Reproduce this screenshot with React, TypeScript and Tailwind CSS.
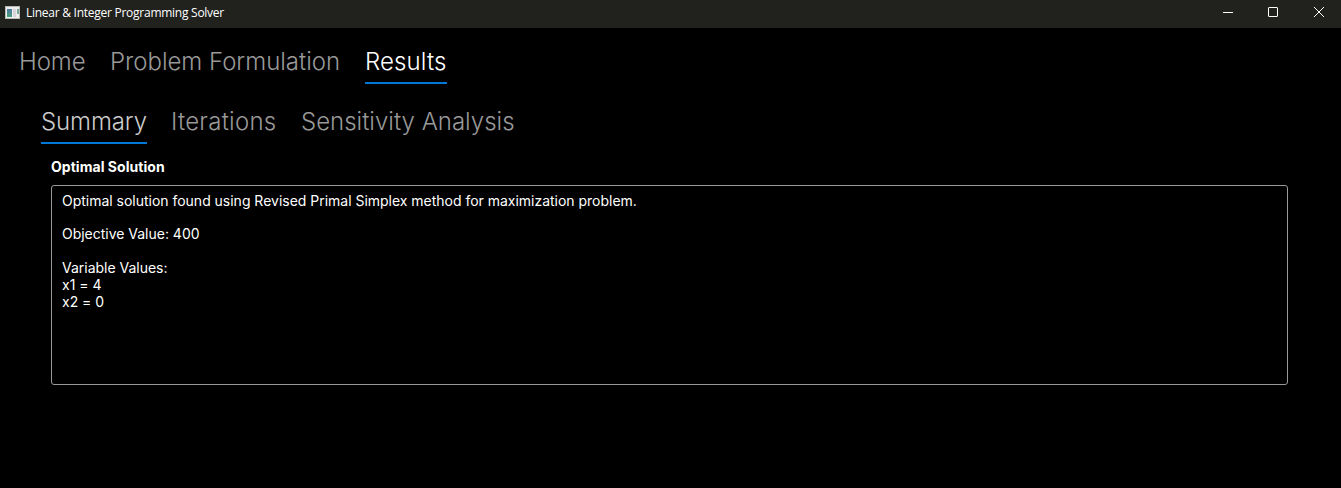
import React from "react";

type TabProps = { label: string; active?: boolean; className: string };

function Tab({ label, active = false, className }: TabProps) {
  return (
    <div className={`relative h-[48px] shrink-0 whitespace-nowrap pt-[2px] text-[24px] leading-[48px] font-light ${className}`}>
      {label}
      {active && <span className="absolute inset-x-0 bottom-0 h-[2px] bg-[#0078d7]" />}
    </div>
  );
}

export default function App() {
  return (
    <div className="h-[488px] w-[1341px] overflow-hidden bg-black font-['Inter',sans-serif] text-white">
      <header className="flex h-[28px] items-center bg-[#21211e] pl-[5px]">
        <svg width="15" height="13" viewBox="0 0 15 13" className="mb-[4px]" shapeRendering="crispEdges">
          <defs>
            <linearGradient id="pane" x1="0" y1="0" x2="0" y2="1">
              <stop offset="0" stopColor="#5078a0" />
              <stop offset="1" stopColor="#46a078" />
            </linearGradient>
          </defs>
          <rect width="15" height="13" fill="#b8b8b8" />
          <rect x="1" y="1" width="13" height="11" fill="#eeeeee" />
          <rect x="2" y="3" width="5" height="8" fill="url(#pane)" />
          <rect x="8" y="3" width="3" height="8" fill="#d8d4dc" />
          <rect x="12" y="3" width="2" height="5" fill="#78aa98" />
        </svg>
        <span className="mb-[2px] ml-[6px] font-['Open_Sans',sans-serif] text-[12px] tracking-[-0.26px]">Linear &amp; Integer Programming Solver</span>
        <svg width="106" height="12" viewBox="0 0 106 12" className="mr-[15px] mb-[4px] ml-auto" fill="none" stroke="white">
          <path d="M3 6.5h10M94 1l10 10M104 1L94 11" />
          <rect x="48.5" y="1.5" width="9" height="9" rx="0.5" />
        </svg>
      </header>
      <nav className="flex h-[60px] gap-[25px] pt-[8px] pl-[19px]">
        <Tab label="Home" className="w-[66px] text-[#999999] tracking-[-0.1px]" />
        <Tab label="Problem Formulation" className="w-[230px] text-[#999999] tracking-[-0.02px]" />
        <Tab label="Results" active className="w-[82px] text-white tracking-[0.12px]" />
      </nav>
      <nav className="flex h-[60px] gap-[25px] pt-[8px] pl-[41px]">
        <Tab label="Summary" active className="w-[106px] text-[#cccccc] tracking-[-0.12px]" />
        <Tab label="Iterations" className="-ml-px w-[105px] text-[#999999] tracking-[0.25px]" />
        <Tab label="Sensitivity Analysis" className="text-[#999999]" />
      </nav>
      <main className="pt-[10px] pl-[51px]">
        <h1 className="text-[14px] leading-[17px] font-bold tracking-[0.04px]">Optimal Solution</h1>
        <div className="mt-[10px] h-[200px] w-[1237px] rounded-[3px] border border-[#999999] px-[10px] pt-[6.8px] text-[14px] leading-[16.8px] tracking-[-0.015px] whitespace-pre">
          {"Optimal solution found using Revised Primal Simplex method for maximization problem.\n\nObjective Value: 400\n\nVariable Values:\nx1 = 4\nx2 = 0"}
        </div>
      </main>
    </div>
  );
}
